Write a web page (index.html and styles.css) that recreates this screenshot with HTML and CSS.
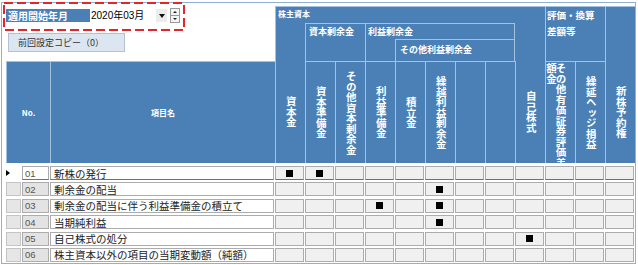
FILE: index.html
```html
<!DOCTYPE html>
<html>
<head>
  <meta charset="utf-8">
  <title>株主資本等変動計算書 項目設定</title>
  <link rel="stylesheet" href="styles.css">
</head>
<body>
  <div class="panel">
    <svg class="focus-ring" width="186" height="32"><rect x="2" y="2" width="180" height="27" fill="none" stroke="#e3262c" stroke-width="2" stroke-dasharray="9 4"/></svg>

    <div class="head">
      <div class="controls">
        <div class="period">
          <span class="period-label">適用開始年月</span>
          <span class="period-select"><span class="period-value">2020年03月</span><span class="drop"></span></span>
          <span class="spin"><span class="spin-up"></span><span class="spin-down"></span></span>
        </div>
        <button class="copy-btn">前回設定コピー（0）</button>
      </div>

      <div class="hc g-equity">株主資本</div>
      <div class="hc g-capsur">資本剰余金</div>
      <div class="hc g-retained">利益剰余金</div>
      <div class="hc g-otherret">その他利益剰余金</div>
      <div class="hc g-valuation">評価・換算<br>差額等</div>
      <div class="hc g-warrant"></div>

      <div class="hc leaf plain">No.</div>
      <div class="hc leaf plain">項目名</div>
      <div class="hc leaf open"><span class="v">資本金</span></div>
      <div class="hc leaf"><span class="v">資本準備金</span></div>
      <div class="hc leaf"><span class="v">その他資本剰余金</span></div>
      <div class="hc leaf"><span class="v">利益準備金</span></div>
      <div class="hc leaf"><span class="v">積立金</span></div>
      <div class="hc leaf"><span class="v">繰越利益剰余金</span></div>
      <div class="hc leaf"></div>
      <div class="hc leaf"></div>
      <div class="hc leaf open"><span class="v">自己株式</span></div>
      <div class="hc leaf wrap"><span class="v">その他有価証券評価差額金</span></div>
      <div class="hc leaf"><span class="v">繰延ヘッジ損益</span></div>
      <div class="hc leaf open"><span class="v">新株予約権</span></div>
    </div>

    <div class="rows" id="rows"></div>
  </div>

  <script>
    // 列: 0 資本金 1 資本準備金 2 その他資本剰余金 3 利益準備金 4 積立金 5 繰越利益剰余金
    //     6,7 空き 8 自己株式 9 その他有価証券評価差額金 10 繰延ヘッジ損益 11 新株予約権
    const items = [
      ['01', '新株の発行', [0, 1]],
      ['02', '剰余金の配当', [5]],
      ['03', '剰余金の配当に伴う利益準備金の積立て', [3, 5]],
      ['04', '当期純利益', [5]],
      ['05', '自己株式の処分', [8]],
      ['06', '株主資本以外の項目の当期変動額（純額）', []]
    ];

    const rows = document.getElementById("rows");

    items.forEach(function (item, i) {
      const cur = i === 0 ? " cur" : "";
      let html = '<div class="cell rh' + cur + '">' + (i === 0 ? '<span class="arrow"></span>' : '') + '</div>';
      html += '<div class="cell no' + cur + '">' + item[0] + '</div>';
      html += '<div class="cell name' + cur + '">' + item[1] + '</div>';
      for (let c = 0; c < 12; c++) {
        html += '<div class="cell' + cur + '">' + (item[2].includes(c) ? '<span class="mark"></span>' : '') + '</div>';
      }
      rows.insertAdjacentHTML("beforeend", html);
    });
  </script>
</body>
</html>
```

FILE: styles.css
```css
body {
  margin: 0;
  font-family: "Noto Sans CJK JP", sans-serif;
  color: #222;
  background-color: #fff;
}
.panel {
  position: relative;
  width: 635px;
  height: 262px;
  margin: 2px 0 0 1px;
  padding: 3px 0 0 4px;
  border: 1px solid #8fb1d4;
  box-sizing: border-box;
}
.focus-ring {
  position: absolute;
  left: 0;
  top: -2px;
  z-index: 2;
}

/* header */
.head {
  display: grid;
  grid-template-columns: 44px 225px repeat(12, 30px);
  grid-template-rows: 17px 16px 22px 102px;
}
.controls {
  grid-column: 1 / 3;
  grid-row: 1 / 4;
  padding-top: 3px;
}
.period {
  display: flex;
  height: 13px;
}
.period-label {
  width: 84px;
  padding-left: 2px;
  box-sizing: border-box;
  background-color: #4a80b6;
  color: #fff;
  font-weight: bold;
  font-size: 10px;
  line-height: 13px;
}
.period-select {
  display: flex;
  width: 77px;
  background-color: #fff;
}
.period-value {
  flex: 1;
  padding-left: 1px;
  font-family: "Liberation Sans", "Noto Sans CJK JP", sans-serif;
  font-size: 10px;
  line-height: 13px;
  color: #000;
}
.drop {
  width: 11px;
  background-color: #ececec;
  display: flex;
  align-items: center;
  justify-content: center;
}
.drop::after {
  content: "";
  border-left: 3.5px solid transparent;
  border-right: 3.5px solid transparent;
  border-top: 4px solid #111;
}
.spin {
  display: flex;
  flex-direction: column;
  width: 10px;
  height: 15px;
  margin: -1px 0 0 3px;
  border: 1px solid #9a9a9a;
  box-sizing: border-box;
  background-color: #f4f4f4;
}
.spin span {
  flex: 1;
  display: flex;
  align-items: center;
  justify-content: center;
}
.spin span + span {
  border-top: 1px solid #9a9a9a;
}
.spin-up::after {
  content: "";
  border-left: 2px solid transparent;
  border-right: 2px solid transparent;
  border-bottom: 2px solid #222;
}
.spin-down::after {
  content: "";
  border-left: 2px solid transparent;
  border-right: 2px solid transparent;
  border-top: 2px solid #222;
}
.copy-btn {
  display: block;
  width: 117px;
  height: 19px;
  margin: 11px 0 0 2px;
  padding: 0 0 0 9px;
  text-align: left;
  background-color: #dce6f1;
  border: 1px solid #b3c2d2;
  box-sizing: border-box;
  font-family: inherit;
  font-size: 9px;
  color: #333;
}

.hc {
  background-color: #4a80b6;
  color: #fff;
  font-weight: bold;
  font-size: 9px;
  line-height: 12px;
  border-left: 1px solid #a5c1dd;
  border-top: 1px solid #a5c1dd;
  box-sizing: border-box;
  white-space: nowrap;
}
.g-equity {
  grid-column: 3 / 12;
  grid-row: 1 / 4;
  padding: 1px 0 0 2px;
  font-size: 8px;
}
.g-capsur {
  grid-column: 4 / 6;
  grid-row: 2 / 4;
  padding: 2px 0 0 3px;
}
.g-retained {
  grid-column: 6 / 11;
  grid-row: 2 / 4;
  padding: 2px 0 0 2px;
  border-right: 1px solid #a5c1dd;
}
.g-otherret {
  grid-column: 7 / 11;
  grid-row: 3 / 4;
  padding: 4px 0 0 4px;
  border-right: 1px solid #a5c1dd;
}
.g-valuation {
  grid-column: 12 / 14;
  grid-row: 1 / 4;
  padding-left: 1px;
  font-size: 9.5px;
  line-height: 16px;
}
.g-warrant {
  grid-column: 14;
  grid-row: 1 / 4;
}
.leaf {
  grid-row: 4;
  display: flex;
  align-items: center;
  justify-content: center;
}
.leaf.open {
  border-top: 0;
}
.leaf.plain {
  font-size: 8px;
}
.v {
  writing-mode: vertical-rl;
  text-orientation: upright;
  font-size: 10.5px;
  line-height: 1;
}
.leaf.wrap {
  align-items: flex-start;
  padding: 1px 9px 0 0;
  overflow: hidden;
}
.wrap .v {
  height: 106px;
  line-height: 9.5px;
  white-space: normal;
}

/* rows */
.rows {
  display: grid;
  grid-template-columns: 16px 28px 225px repeat(12, 30px);
  grid-auto-rows: 14px;
  row-gap: 2.4px;
  margin-top: 3px;
}
.cell {
  display: flex;
  align-items: center;
  justify-content: center;
  margin-right: 1px;
  border: 1px solid #acacac;
  box-sizing: border-box;
  background-color: #f0f0f0;
}
.cell.rh {
  background-color: #e6e6e6;
  border-color: #c4c4c4;
}
.cell.no {
  justify-content: flex-start;
  padding-left: 2px;
  background-color: #e3e3e3;
  font-family: "Liberation Sans", sans-serif;
  font-size: 9.5px;
  color: #555;
}
.cell.name {
  justify-content: flex-start;
  padding-left: 3px;
  background-color: #fff;
  font-size: 10.5px;
  color: #222;
  white-space: nowrap;
}
.cell.cur {
  border-bottom-color: #707070;
}
.cell.rh.cur {
  justify-content: flex-start;
  background-color: #fff;
  border-color: #fff;
}
.cell.no.cur {
  background-color: #fff;
}
.arrow {
  margin-left: -1px;
  border-top: 3px solid transparent;
  border-bottom: 3px solid transparent;
  border-left: 4px solid #000;
}
.mark {
  width: 7px;
  height: 7px;
  background-color: #000;
}
```
